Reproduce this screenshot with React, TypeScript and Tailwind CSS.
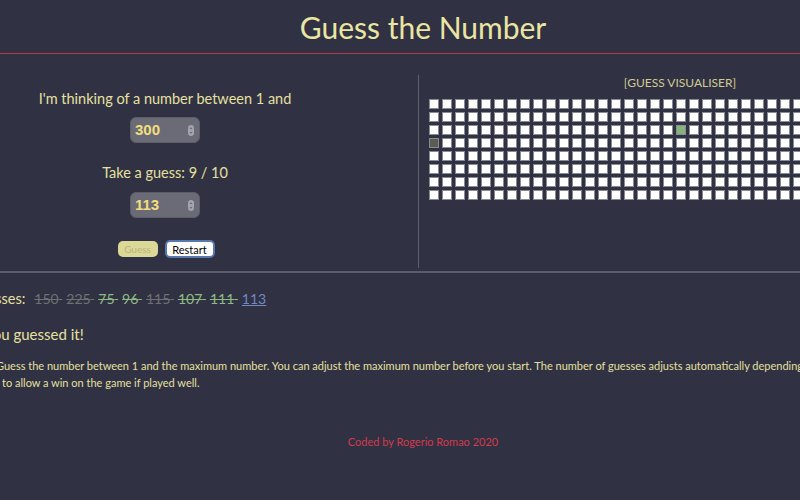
const guesses = [
  { n: 150, c: "text-[#6f7074]" },
  { n: 225, c: "text-[#6f7074]" },
  { n: 75, c: "text-[#8dbb86]" },
  { n: 96, c: "text-[#8dbb86]" },
  { n: 115, c: "text-[#6f7074]" },
  { n: 107, c: "text-[#8dbb86]" },
  { n: 111, c: "text-[#8dbb86]" },
];

function Spinner() {
  return (
    <svg width="6" height="11" viewBox="0 0 6 11">
      <rect x="0" y="0" width="6" height="11" rx="3" fill="#a3a3ad" />
      <path d="M1.5 4 L3 2.2 L4.5 4 Z" fill="#6a6a77" />
      <path d="M1.5 7 L3 8.8 L4.5 7 Z" fill="#6a6a77" />
    </svg>
  );
}

function NumberBox({ value }: { value: string }) {
  return (
    <div className="w-[70px] h-[26px] rounded-md bg-[#6b6b78] border border-[#5d5d69] flex items-center justify-between pl-[4px] pr-[5px] font-['Liberation_Sans',sans-serif] font-bold text-[15px] text-[#f2de7c]">
      <span>{value}</span>
      <Spinner />
    </div>
  );
}

function Cell({ i }: { i: number }) {
  let cls = "bg-white";
  if (i === 96) cls = "bg-[#86b47e]";
  if (i === 115) cls = "bg-[#5b5c52]";
  return <div className={`w-[10px] h-[10px] border border-[#8a8a92] ${cls}`} />;
}

export default function App() {
  const cells = Array.from({ length: 300 }, (_, k) => k + 1);
  return (
    <div className="min-h-screen w-full overflow-hidden bg-[#303142] font-['Lato',sans-serif] text-[#e6e0a0]">
      <header className="h-[54px] flex items-center justify-center pl-[46px] border-b border-[#b8394e]">
        <h1 className="text-[30px] leading-none text-[#ebe5a2]">Guess the Number</h1>
      </header>

      <section className="flex pt-[21px] pb-[3px] border-b-2 border-[#5c5d68]">
        <div className="-ml-[88px] flex shrink-0">
          <div className="w-[507px] border-r border-[#5f6068] flex flex-col items-center pt-[14px]">
            <p className="text-[14.5px] leading-[20px]">I'm thinking of a number between 1 and</p>
            <div className="mt-[8px]">
              <NumberBox value="300" />
            </div>
            <p className="mt-[20px] text-[14.5px] leading-[20px]">Take a guess: 9 / 10</p>
            <div className="mt-[9px]">
              <NumberBox value="113" />
            </div>
            <div className="mt-[23px] mb-[10px] flex gap-[7px] pl-[2px]">
              <button className="w-[40px] h-[16px] rounded-[5px] bg-[#dcd898] text-[#bab57c] text-[10px] leading-none">
                Guess
              </button>
              <button className="w-[50px] h-[18px] rounded-[5px] bg-white border-2 border-[#5877ad] text-black text-[11px] leading-none -mt-[1px]">
                Restart
              </button>
            </div>
          </div>
          <div className="w-[522px] pl-[10px]">
            <p className="text-center text-[12px] leading-[16px] text-[#d2cc92] pr-[10px]">[GUESS VISUALISER]</p>
            <div className="mt-[8px] w-[494px] flex flex-wrap gap-[3px]">
              {cells.map((i) => (
                <Cell key={i} i={i} />
              ))}
            </div>
          </div>
        </div>
      </section>

      <section className="pt-[16px]">
        <div className="-ml-[31px] flex items-baseline text-[14.5px] leading-[20px]">
          <span className="mr-[9px]">Guesses:</span>
          {guesses.map((g) => (
            <span key={g.n} className={`mr-[4px] text-[14px] line-through ${g.c}`}>
              {g.n}
              {"\u00a0"}
            </span>
          ))}
          <span className="text-[14px] underline text-[#7089c2]">113</span>
        </div>
        <p className="-ml-[15px] mt-[15px] text-[15px] leading-[20px]">You guessed it!</p>
        <div className="-ml-[4px] mt-[13px] text-[11px] leading-[17px] whitespace-nowrap">
          <p>
            Guess the number between 1 and the maximum number. You can adjust the maximum number before you start. The
            number of guesses adjusts automatically depending on the maximum number,
          </p>
          <p className="pl-[6px]">to allow a win on the game if played well.</p>
        </div>
        <p className="pl-[46px] mt-[43px] text-center text-[11px] text-[#d23a4e]">Coded by Rogerio Romao 2020</p>
      </section>
    </div>
  );
}
